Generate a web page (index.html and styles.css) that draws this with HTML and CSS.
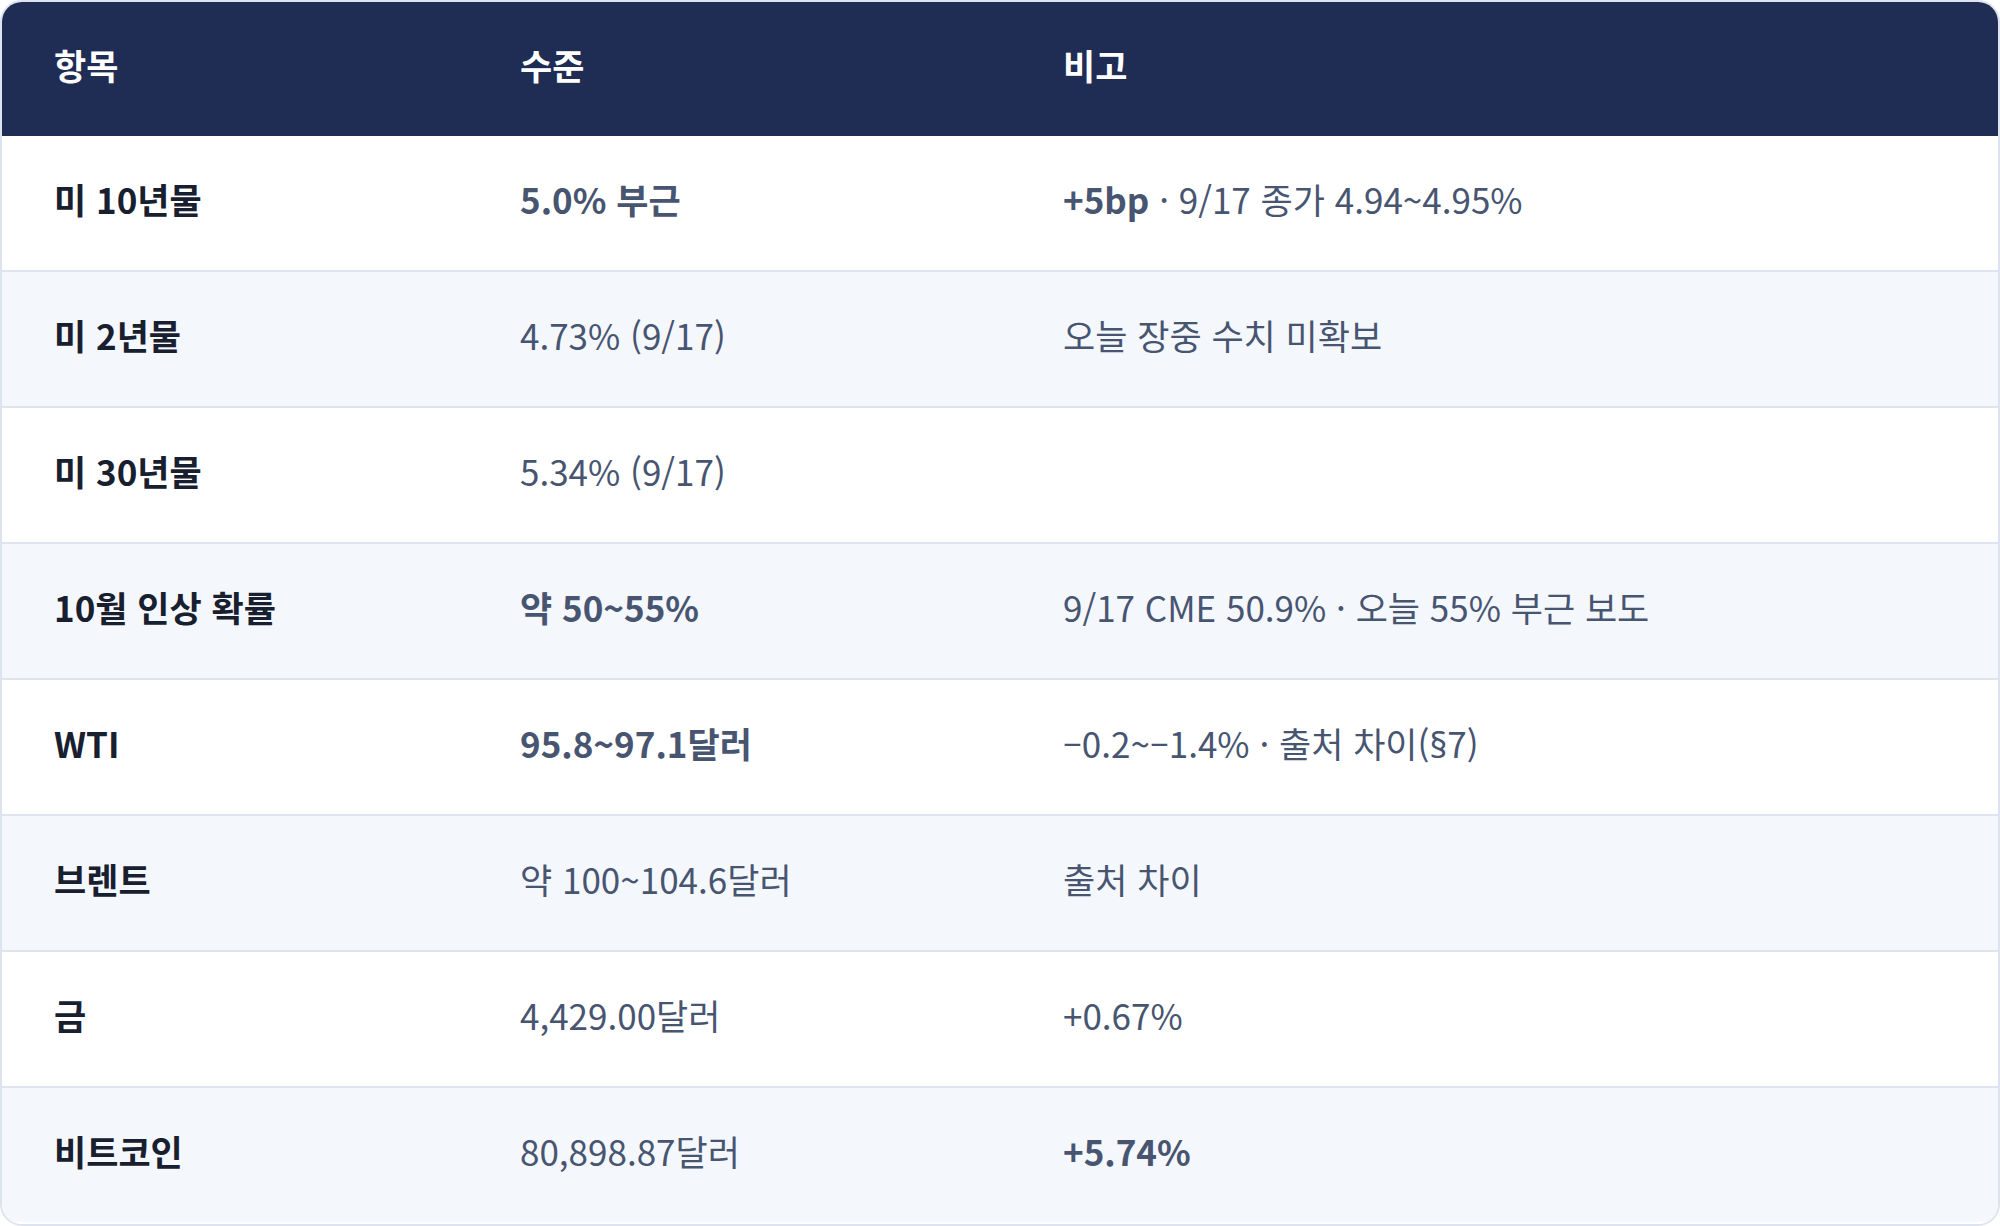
FILE: index.html
```html
<!DOCTYPE html>
<html lang="ko">
<head>
<meta charset="utf-8">
<title>지표</title>
<link rel="stylesheet" href="styles.css">
</head>
<body>
<div class="card">
  <table class="tbl">
    <colgroup>
      <col class="c1"><col class="c2"><col class="c3">
    </colgroup>
    <thead>
      <tr><th>항목</th><th>수준</th><th>비고</th></tr>
    </thead>
    <tbody>
      <tr><td class="name">미 10년물</td><td class="strong">5.0% 부근</td><td><b>+5bp</b> · 9/17 종가 4.94~4.95%</td></tr>
      <tr><td class="name">미 2년물</td><td>4.73% (9/17)</td><td>오늘 장중 수치 미확보</td></tr>
      <tr><td class="name">미 30년물</td><td>5.34% (9/17)</td><td></td></tr>
      <tr><td class="name">10월 인상 확률</td><td class="strong">약 50~55%</td><td>9/17 CME 50.9% · 오늘 55% 부근 보도</td></tr>
      <tr><td class="name">WTI</td><td class="strong">95.8~97.1달러</td><td>–0.2~–1.4% · 출처 차이(<span class="latin">§</span>7)</td></tr>
      <tr><td class="name">브렌트</td><td>약 100~104.6달러</td><td>출처 차이</td></tr>
      <tr><td class="name">금</td><td>4,429.00달러</td><td>+0.67%</td></tr>
      <tr><td class="name">비트코인</td><td>80,898.87달러</td><td class="strong">+5.74%</td></tr>
    </tbody>
  </table>
</div>
</body>
</html>
```
FILE: styles.css
```css
html, body {
  margin: 0;
  padding: 0;
  background: #ffffff;
}
body {
  font-family: "Noto Sans CJK KR", "Noto Sans", sans-serif;
  width: 2000px;
  height: 1226px;
}
.card {
  box-sizing: border-box;
  width: 2000px;
  height: 1226px;
  border: 2px solid #dde3ef;
  border-radius: 22px;
  overflow: hidden;
  background: #ffffff;
}
.tbl {
  width: 100%;
  border-collapse: separate;
  border-spacing: 0;
  table-layout: fixed;
  font-size: 35px;
  letter-spacing: 0;
}
.c1 { width: 466px; }
.c2 { width: 543px; }
.c3 { width: auto; }
.tbl th {
  background: #1f2c53;
  color: #ffffff;
  font-weight: 700;
  text-align: left;
  height: 134px;
  padding: 0 0 10px 52px;
  box-sizing: border-box;
  vertical-align: middle;
}
.tbl td {
  height: 136px;
  box-sizing: border-box;
  padding: 0 0 10px 52px;
  border-top: 2px solid #dfe5f0;
  color: #485571;
  vertical-align: middle;
  white-space: nowrap;
}
.tbl tbody tr:first-child td {
  border-top: none;
  height: 134px;
}
.tbl tbody tr:nth-child(even) td {
  background: #f4f7fc;
}
.tbl td.name {
  color: #18202f;
  font-weight: 700;
}
.tbl td.strong, .tbl td b {
  font-weight: 700;
}
.latin {
  font-family: "Noto Sans", sans-serif;
}
```
